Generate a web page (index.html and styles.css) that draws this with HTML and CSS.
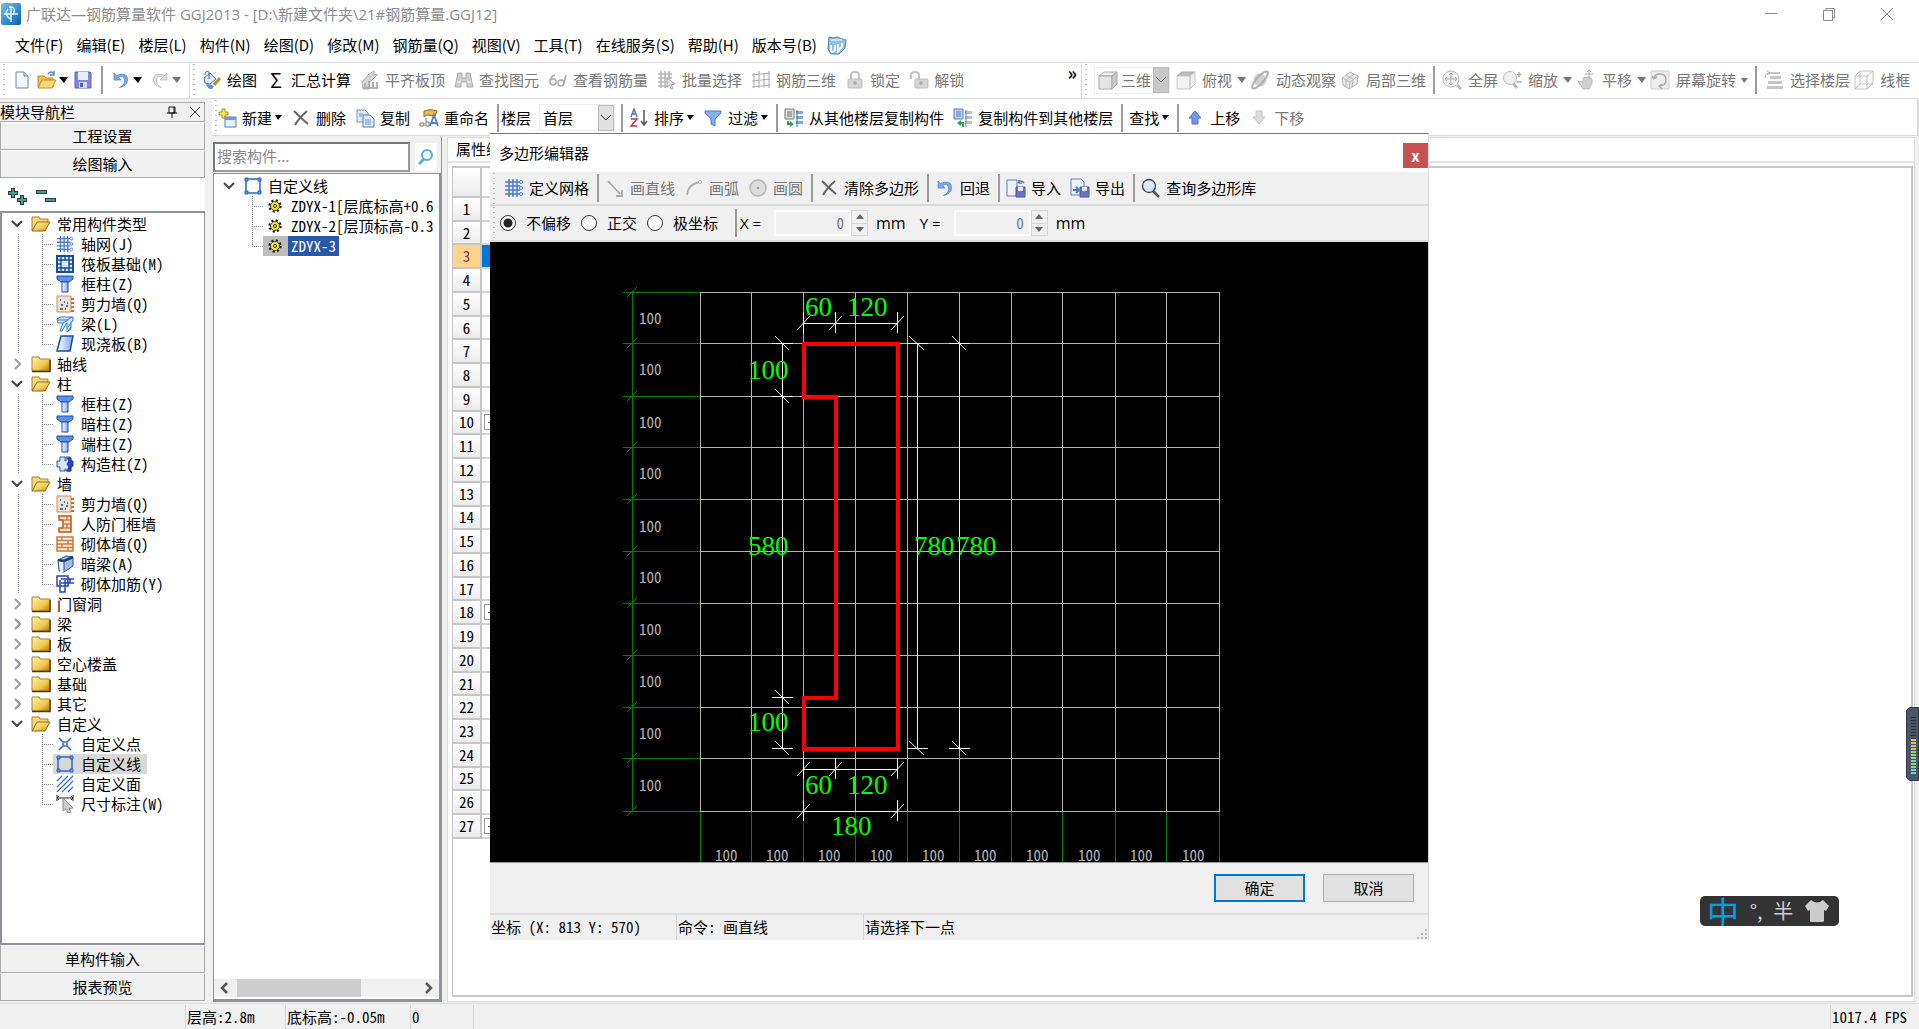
FILE: index.html
```html
<!DOCTYPE html>
<html lang="zh-CN">
<head>
<meta charset="utf-8">
<title>广联达—钢筋算量软件 GGJ2013</title>
<link rel="stylesheet" href="styles.css">
</head>
<body>
<svg class="defs" aria-hidden="true">
  <defs>
    <linearGradient id="gold" x1="0" y1="0" x2="1" y2="1"><stop offset="0" stop-color="#fff3b0"/><stop offset=".6" stop-color="#f2c84b"/><stop offset="1" stop-color="#b07a10"/></linearGradient>
    <linearGradient id="blue" x1="0" y1="0" x2="1" y2="0"><stop offset="0" stop-color="#fff"/><stop offset="1" stop-color="#7fa6f0"/></linearGradient>
    <linearGradient id="brand" x1="0" y1="0" x2="1" y2="1"><stop offset="0" stop-color="#6cc4f4"/><stop offset="1" stop-color="#0b5fb0"/></linearGradient>
  </defs>
  <symbol id="i-new" viewBox="0 0 20 20"><path d="M4 2h8l4 4v12H4z" fill="#f3f8fd" stroke="#6d87a8"/><path d="M12 2v4h4" fill="#cfe0f2" stroke="#6d87a8"/></symbol>
  <symbol id="i-open" viewBox="0 0 20 20"><path d="M1 6h6l2 2h7v9H1z" fill="#f0bf52" stroke="#c48a1c"/><path d="M1 18l4-8h14l-4 8z" fill="#fbd978" stroke="#c48a1c"/><path d="M11 4q3-4 6 0M17 1v4h-4" fill="none" stroke="#5d85b8" stroke-width="1.4"/></symbol>
  <symbol id="i-save" viewBox="0 0 20 20"><path d="M2 2h15l1 1v15H2z" fill="#8187d6" stroke="#5c62b0"/><path d="M5 2h10v8H5z" fill="#e8ebfa"/><path d="M6 12h8v6H6z" fill="#d3d6e8"/><path d="M7 13h3v4H7z" fill="#565ca8"/></symbol>
  <symbol id="i-undo" viewBox="0 0 20 20"><path d="M3 3v7h7L7.500 7.500q5-3 6 2t-5 8q9-2 8-9T5.500 5.500z" fill="#7aa6ec" stroke="#5b88d8" stroke-width=".8"/></symbol>
  <symbol id="i-redo" viewBox="0 0 20 20"><path d="M17 3v7h-7l2.500-2.500q-5-3-6 2t5 8q-9-2-8-9T14.500 5.500z" fill="#e0e0e0" stroke="#bbb" stroke-width=".8"/></symbol>
  <symbol id="i-paint" viewBox="0 0 20 20"><path d="M2 8l6-5 6 6-6 5-5-1z" fill="#dfe8f5" stroke="#4e6b98"/><path d="M7 9V2q-4-2-4 3" fill="none" stroke="#4e6b98"/><path d="M18 8l-6 7" stroke="#b8902c" stroke-width="3"/><path d="M4 14q5 0 8 2l-2 3q-4 1-6-5z" fill="#5b8fe0"/></symbol>
  <symbol id="i-flat" viewBox="0 0 20 20"><path d="M2 12l7-8 5-3v4l4-1-9 9v6H3z" fill="#d5d5d5" stroke="#b0b0b0"/><path d="M5 13v5M9 11v7M13 12v6M17 12v6M3 18h15" stroke="#b0b0b0" stroke-width="2"/></symbol>
  <symbol id="i-bino" viewBox="0 0 20 20"><path d="M4 3h4v5h4V3h4l3 14h-6v-5H7v5H1z" fill="#cfcfcf" stroke="#aaa"/><path d="M3 12h4M13 12h4" stroke="#fff"/></symbol>
  <symbol id="i-glass" viewBox="0 0 20 20"><g fill="none" stroke="#aaa" stroke-width="1.500"><circle cx="5" cy="12" r="3"/><circle cx="13" cy="13" r="3"/><path d="M2 11q1-5 5-6M16 13l2-8"/></g></symbol>
  <symbol id="i-batch" viewBox="0 0 20 20"><path d="M1 4h14M1 8h14M1 12h9M1 16h9M4 1v17M8 1v17M12 1v9" stroke="#b5b5b5" stroke-width="1.500"/><path d="M10 8l8 6-4 .5 2 4-2 .5-1.500-4-2.500 2z" fill="#e4e4e4" stroke="#aaa"/></symbol>
  <symbol id="i-mesh" viewBox="0 0 20 20"><path d="M3 3v15M8 1v17M13 3v15M18 1v17M1 5l18-2M1 11l18-2M1 17l18-2" stroke="#aaa" fill="none"/></symbol>
  <symbol id="i-lock" viewBox="0 0 20 20"><path d="M6 9V5q0-3 4-3t4 3v4" fill="none" stroke="#c2c2c2" stroke-width="2"/><rect x="3" y="9" width="14" height="9" rx="1" fill="#d4d4d4" stroke="#bbb"/><path d="M10 11v4M8 13h4" stroke="#999"/></symbol>
  <symbol id="i-unlock" viewBox="0 0 20 20"><path d="M2 9V5q0-3 4-3t4 3v4" fill="none" stroke="#c2c2c2" stroke-width="2"/><rect x="6" y="9" width="13" height="9" rx="1" fill="#d4d4d4" stroke="#bbb"/><path d="M12 11v4M10 13h4" stroke="#999"/></symbol>
  <symbol id="i-cube" viewBox="0 0 20 20"><path d="M1 6l5-4h13l-5 4z" fill="#eee" stroke="#aaa"/><path d="M1 6h13v13H1z" fill="#e4e4e4" stroke="#aaa"/><path d="M14 6l5-4v12l-5 5z" fill="#c8c8c8" stroke="#aaa"/></symbol>
  <symbol id="i-cubetop" viewBox="0 0 20 20"><path d="M1 6l5-4h13l-5 4z" fill="#bbb" stroke="#aaa"/><path d="M1 6h13v13H1zM14 6l5-4v12l-5 5z" fill="#f2f2f2" stroke="#c5c5c5"/></symbol>
  <symbol id="i-orbit" viewBox="0 0 20 20"><circle cx="10" cy="10" r="6.500" fill="#cfcfcf"/><ellipse cx="10" cy="10" rx="11" ry="3.500" transform="rotate(-48 10 10)" fill="none" stroke="#b0b0b0" stroke-width="2"/></symbol>
  <symbol id="i-part" viewBox="0 0 20 20"><path d="M2 8l8-6 8 4-1 8-8 5-6-4z" fill="#e8e8e8" stroke="#b8b8b8"/><path d="M2 8l8 4 8-6M10 12l-1 7M6 5l7 4-1 8M14 4l-8 6v7" fill="none" stroke="#b8b8b8"/></symbol>
  <symbol id="i-full" viewBox="0 0 20 20"><path d="M15 15l4 4" stroke="#bbb" stroke-width="3"/><circle cx="9" cy="9" r="8" fill="#f4f4f4" stroke="#bbb"/><path d="M9 3v12M3 9h12M7 5l2-2 2 2M7 13l2 2 2-2M5 7L3 9l2 2M13 7l2 2-2 2" fill="none" stroke="#aaa"/></symbol>
  <symbol id="i-zoom" viewBox="0 0 20 20"><path d="M11 13l4 5" stroke="#bbb" stroke-width="3"/><circle cx="8" cy="8" r="6.500" fill="#f0f0f0" stroke="#c0c0c0"/><path d="M17 2v5M14.500 4.500h5M14.500 12h5" stroke="#aaa" stroke-width="1.500"/></symbol>
  <symbol id="i-hand" viewBox="0 0 20 20"><path d="M2 11l5 1V8l6-1 3 2v4l-3 6H7z" fill="#d0d0d0" stroke="#bbb"/><path d="M13 0v9M9 4h8M11 2l2-2 2 2" stroke="#aaa" fill="none"/></symbol>
  <symbol id="i-rot" viewBox="0 0 20 20"><path d="M1 1h18v18H1z" fill="#eee" stroke="#ccc"/><path d="M4 9q0-5 6-5t6 6-7 6M4 9L2 6M4 9l3-2M9 16l3-2M9 16l3 3" fill="none" stroke="#aaa" stroke-width="1.500"/></symbol>
  <symbol id="i-floor" viewBox="0 0 20 20"><path d="M6 2h10v2H6zM6 6h11v3H6zM4 11h14v3H4zM3 16h16v3H3z" fill="#c5c5c5"/><path d="M1 8q0-5 5-5M3 1l3 2-3 2" fill="none" stroke="#aaa"/></symbol>
  <symbol id="i-wire" viewBox="0 0 20 20"><path d="M1 6h12v13H1zM1 6l5-5h13l-6 5M19 1v12l-6 6M6 1v13h13M6 14l-5 5" fill="none" stroke="#c0c0c0"/></symbol>
  <symbol id="i-create" viewBox="0 0 20 20"><path d="M5 1h3v3h3v3H8v3H5V7H2V4h3z" fill="#ffe257" stroke="#b8901c"/><rect x="8" y="9" width="11" height="10" fill="#e8f0fa" stroke="#5b7fc0"/><path d="M8 9h11v3H8z" fill="#6d98de"/></symbol>
  <symbol id="i-x" viewBox="0 0 20 20"><path d="M3 3q8 8 14 13M16 3Q8 10 4 17" fill="none" stroke="#666" stroke-width="2"/></symbol>
  <symbol id="i-copy" viewBox="0 0 20 20"><path d="M2 2h8l3 3v9H2z" fill="#dfeaf9" stroke="#6b90cc"/><path d="M8 7h7l4 4v8H8z" fill="#dfeaf9" stroke="#4f78bd"/><path d="M10 12h6M10 14h6M10 16h6M4 6h4M4 8h3" stroke="#6b90cc"/></symbol>
  <symbol id="i-rename" viewBox="0 0 20 20"><path d="M5 3q6-3 13 0l-2 5-8-1-3 2z" fill="#eeb94a" stroke="#8f6a22"/><path d="M11 18l4-11 4 11M12 15h6" stroke="#4b7fd6" stroke-width="1.800" fill="none"/><path d="M1 18v-3h4v3H1M7 10v8h3v-4H7" fill="none" stroke="#777"/></symbol>
  <symbol id="i-sort" viewBox="0 0 20 20"><path d="M2 9l3-8 3 8M3 6h4" fill="none" stroke="#4a78cc" stroke-width="1.500"/><path d="M2 11h6l-6 7h6" fill="none" stroke="#c03a3a" stroke-width="1.500"/><path d="M15 2v15M12 13l3 4 3-4" fill="none" stroke="#555" stroke-width="1.500"/></symbol>
  <symbol id="i-funnel" viewBox="0 0 20 20"><path d="M2 3h16v2l-6 6v7l-4-2v-5L2 5z" fill="#86aef2" stroke="#4a78cc"/></symbol>
  <symbol id="i-cfrom" viewBox="0 0 20 20"><path d="M1 1h9v10H1z" fill="#ddd" stroke="#777"/><path d="M3 4h5M3 6h5M3 8h5" stroke="#777"/><path d="M12 3h7v3h-7zM12 8h7v3h-7zM12 13h7v3h-7z" fill="#7ea7e6"/><path d="M3 13v4h3v2l4-3-4-3v2H5v-2z" fill="#2b9d4b"/><path d="M13 2v17" stroke="#3e66a8"/></symbol>
  <symbol id="i-cto" viewBox="0 0 20 20"><path d="M1 1h9v10H1z" fill="#bdd3f7" stroke="#5b7fc0"/><path d="M3 4h5M3 6h5M3 8h5" stroke="#5b7fc0"/><path d="M12 3h7v3h-7zM12 8h7v3h-7zM12 13h7v3h-7z" fill="#b5c0cc"/><path d="M13 2v17" stroke="#777"/><path d="M4 15l4-3v2h3v5H9v-3H8v2z" fill="#2b9d4b"/></symbol>
  <symbol id="i-up" viewBox="0 0 20 20"><path d="M10 3l6 7h-3v6H7v-6H4z" fill="#6d98ea" stroke="#4a70c4"/></symbol>
  <symbol id="i-down" viewBox="0 0 20 20"><path d="M10 16l6-7h-3V3H7v6H4z" fill="#ddd" stroke="#c6c6c6"/></symbol>
  <symbol id="i-grid" viewBox="0 0 20 20"><path d="M5 1v18M9 1v18M13 1v18M1 4h15M1 8h15M1 12h15M1 16h15" stroke="#4479da" stroke-width="1.500" fill="none"/><g fill="#fff" stroke="#4479da"><circle cx="17" cy="4" r="1.500"/><circle cx="17" cy="10" r="1.500"/><circle cx="17" cy="16" r="1.500"/></g></symbol>
  <symbol id="i-line" viewBox="0 0 20 20"><path d="M3 3l12 13M17 12v6h-6" fill="none" stroke="#aaa" stroke-width="1.800"/></symbol>
  <symbol id="i-arc" viewBox="0 0 20 20"><path d="M3 17Q4 6 16 4" fill="none" stroke="#b0b0b0" stroke-width="1.800"/><circle cx="16" cy="4" r="1.500" fill="#fff" stroke="#aaa"/></symbol>
  <symbol id="i-circle" viewBox="0 0 20 20"><circle cx="10" cy="10" r="8" fill="#dcdcdc" stroke="#b5b5b5" stroke-width="1.500"/><circle cx="10" cy="10" r="1.200" fill="#999"/></symbol>
  <symbol id="i-imp" viewBox="0 0 20 20"><path d="M1 2h10v16H1z" fill="#eef3fb" stroke="#5f80b5"/><path d="M10 9h9v10h-9z" fill="#6a70c4" stroke="#4b5098"/><path d="M12 9h5v4h-5z" fill="#e8ebfa"/><path d="M12 5q3-4 6 0M13 2v3h3" fill="none" stroke="#5f80b5" stroke-width="1.500"/></symbol>
  <symbol id="i-exp" viewBox="0 0 20 20"><path d="M1 1h10l3 3v13H1z" fill="#eef3fb" stroke="#5f80b5"/><path d="M10 9h9v10h-9z" fill="#6a70c4" stroke="#4b5098"/><path d="M12 9h5v4h-5z" fill="#e8ebfa"/><path d="M3 12h5M6 9l3 3-3 3" fill="none" stroke="#4a78cc" stroke-width="1.800"/></symbol>
  <symbol id="i-find" viewBox="0 0 20 20"><path d="M12 13l6 6" stroke="#555" stroke-width="2.500"/><circle cx="8" cy="8" r="6.500" fill="#d5eafa" stroke="#444" stroke-width="1.300"/></symbol>
  <symbol id="i-search" viewBox="0 0 20 20"><path d="M8 12l-5 5" stroke="#59aee6" stroke-width="3"/><circle cx="11" cy="8" r="5" fill="#eef8fe" stroke="#59aee6" stroke-width="2"/></symbol>
  <symbol id="i-dir" viewBox="0 0 20 18"><path d="M1 5V2h7l1 2h10v12H1z" fill="url(#gold)" stroke="#a5832c"/><path d="M1 16.500h18V5" fill="none" stroke="#4a3a12" stroke-width="1.500"/></symbol>
  <symbol id="i-diro" viewBox="0 0 20 18"><path d="M1 16V2h7l1 2h8v4" fill="#f8d77a" stroke="#a5832c"/><path d="M1 16L6 7h13l-5 9z" fill="url(#gold)" stroke="#8a681c"/></symbol>
  <symbol id="i-raft" viewBox="0 0 18 18"><path d="M1 1h16v16H1z" fill="#dbe8f8" stroke="#174f96" stroke-width="2"/><path d="M5 1v16M13 1v16M1 5h16M1 13h16M9 1v4M9 13v4M1 9h4M13 9h4" stroke="#174f96" stroke-width="1.500"/></symbol>
  <symbol id="i-col" viewBox="0 0 18 18"><path d="M1 1h16v3l-4 3H5L1 4z" fill="#5c8fe6" stroke="#1d4faa"/><path d="M6 7h6v10H6z" fill="url(#blue)" stroke="#1d4faa"/></symbol>
  <symbol id="i-shear" viewBox="0 0 18 18"><path d="M1 1h14v16H1z" fill="#e2e2e2" stroke="#dd8a4c"/><path d="M4 5h1M8 7h1M5 10h2M10 11h2M4 14h3M9 14h1M11 8h1" stroke="#444" stroke-width="1.500"/><path d="M15 4h3M15 8h3M15 12h3M15 16h3" stroke="#d06a1c" stroke-width="2"/></symbol>
  <symbol id="i-beam" viewBox="0 0 18 18"><path d="M1 4l3-2h13v4l-2 1v7l-4 3V8l-1 1-4 7H4l3-8H2z" fill="#cfe4fb" stroke="#2f7cc8"/><path d="M2 5h9l5-3M7 8l5-3M12 12l3-4M12 16l3-4" fill="none" stroke="#2f7cc8"/></symbol>
  <symbol id="i-slab" viewBox="0 0 18 18"><path d="M5 1h12l-3 15H1z" fill="url(#blue)" stroke="#174f96" stroke-width="1.500"/></symbol>
  <symbol id="i-gz" viewBox="0 0 18 18"><path d="M4 2h5v4h1V2h4v4h2v6h-2v4h-4v-2H9v2H4v-4H1V6h3z" fill="#d8e4f8" stroke="#2b5cb0"/><path d="M11 3h4v3h2v5h-2v5h-4l2-4-2-3 2-3z" fill="#2b4cc0" stroke="#1a2f9a"/></symbol>
  <symbol id="i-door" viewBox="0 0 18 18"><path d="M3 1h12v16H3v-4h4V5H3z" fill="#fbe0c8" stroke="#b8561c" stroke-width="1.500"/><path d="M8 5h7M8 9h7M8 13h7M11 1v4M11 9v4" stroke="#b8561c"/></symbol>
  <symbol id="i-brick" viewBox="0 0 18 18"><path d="M1 2h16v14H1z" fill="#fdf0e4" stroke="#d0743c" stroke-width="1.500"/><path d="M1 5.500h16M1 9h16M1 12.500h16M6 2v3M12 5v4M6 9v3M12 12v4" stroke="#d0743c" stroke-width="1.300"/></symbol>
  <symbol id="i-hbeam" viewBox="0 0 18 18"><path d="M2 5l8-4 7 1v9l-9 6-5-1z" fill="#9ebfe8" stroke="#2b5592"/><path d="M3 6h5v11H4z" fill="#e8f0fb"/><path d="M2 5l6 1 9-4" fill="none" stroke="#1f3f74" stroke-width="2.500"/><path d="M8 6v11" stroke="#2b5592"/></symbol>
  <symbol id="i-rein" viewBox="0 0 18 18"><path d="M1 1h11v10H1zM5 4h13M5 8h13M14 4v4M4 5v12h5V5" fill="none" stroke="#2447b8" stroke-width="1.500"/></symbol>
  <symbol id="i-pt" viewBox="0 0 18 18"><path d="M3 3l4.500 4.500M15 3l-4.500 4.500M3 15l4.500-4.500M15 15l-4.500-4.500M7 7h4v4H7z" fill="none" stroke="#3a6fc0" stroke-width="1.500"/></symbol>
  <symbol id="i-sq" viewBox="0 0 18 18"><path d="M2 2h14v14H2z" fill="none" stroke="#2b66c4" stroke-width="1.500"/><path d="M1 1h3v3H1zM14 1h3v3h-3zM1 14h3v3H1zM14 14h3v3h-3z" fill="#5d92e4" stroke="#2b66c4"/></symbol>
  <symbol id="i-face" viewBox="0 0 18 18"><path d="M1 6l5-5M1 12L12 1M1 17L17 1M6 17L17 6M12 17l5-5" stroke="#3a6fd0" stroke-width="1.300"/></symbol>
  <symbol id="i-dim" viewBox="0 0 18 18"><path d="M1 0v6M17 0v6M1 3h16M3 1L1 3l2 2M15 1l2 2-2 2" stroke="#222" fill="none"/><path d="M7 3l10 10-4 .5 2 4-3 .5-2-4-3 2z" fill="#ccc" stroke="#888"/></symbol>
  <symbol id="i-gear" viewBox="0 0 14 14"><circle cx="7" cy="7" r="5.200" fill="none" stroke="#222" stroke-width="3" stroke-dasharray="2 2.084"/><circle cx="7" cy="7" r="4.500" fill="#f4ea1c" stroke="#333" stroke-width=".8"/><circle cx="7" cy="7" r="1.500" fill="#fff" stroke="#222"/></symbol>
  <symbol id="i-chev" viewBox="0 0 14 14"><path d="M2 4l5 5 5-5" fill="none" stroke="#444" stroke-width="2"/></symbol>
  <symbol id="i-chevr" viewBox="0 0 14 14"><path d="M5 2l5 5-5 5" fill="none" stroke="#999" stroke-width="2"/></symbol>
</svg>

<header class="titlebar">
  <svg class="logo" viewBox="0 0 20 22"><rect width="20" height="22" rx="2" fill="url(#brand)"/><path d="M10 3v16M3 11h14M7 6q-5 6 4 11M8 4q8-1 4 8" fill="none" stroke="#e8f6ff" stroke-width="1.500"/></svg>
  <h1>广联达—钢筋算量软件 GGJ2013 - [D:\新建文件夹\21#钢筋算量.GGJ12]</h1>
  <div class="winbtns">
    <button aria-label="最小化"><svg viewBox="0 0 14 14"><path d="M1 6.500h12" stroke="#888"/></svg></button>
    <button aria-label="还原"><svg viewBox="0 0 14 14"><path d="M1.500 3.500h9v10h-9zM4 3V1.500h8.500V11H11" fill="none" stroke="#888"/></svg></button>
    <button aria-label="关闭"><svg viewBox="0 0 14 14"><path d="M1 1l12 12M13 1L1 13" stroke="#888"/></svg></button>
  </div>
</header>

<nav class="menubar">
  <button>文件(F)</button><button>编辑(E)</button><button>楼层(L)</button><button>构件(N)</button><button>绘图(D)</button><button>修改(M)</button><button>钢筋量(Q)</button><button>视图(V)</button><button>工具(T)</button><button>在线服务(S)</button><button>帮助(H)</button><button>版本号(B)</button>
  <svg class="ic bear" viewBox="0 0 20 20"><path d="M2 2l4 1 4-1 5 2 4 1-1 8-6 6H4l-3-5z" fill="#8fc2e4" stroke="#4b87b4"/><path d="M4 5h11" stroke="#c8e4f6" stroke-width="2"/><path d="M4 10v6q3 2 4-1v-5M11 9v7l4-4V8" fill="none" stroke="#fff" stroke-width="1.800"/></svg>
</nav>

<div class="toolrow">
  <div class="bar files">
    <div class="group">
      <button aria-label="新建"><svg class="ic"><use href="#i-new"/></svg></button>
      <button class="drop" aria-label="打开"><svg class="ic"><use href="#i-open"/></svg><i class="caret big"></i></button>
      <button aria-label="保存"><svg class="ic"><use href="#i-save"/></svg></button>
    </div>
    <div class="group">
      <button class="drop" aria-label="撤销"><svg class="ic"><use href="#i-undo"/></svg><i class="caret big"></i></button>
      <button class="drop off" aria-label="恢复"><svg class="ic"><use href="#i-redo"/></svg><i class="caret big"></i></button>
    </div>
  </div>
  <div class="bar">
    <div class="group">
      <button><svg class="ic"><use href="#i-paint"/></svg>绘图</button>
      <button><span class="ic sigma">Σ</span>汇总计算</button>
      <button class="off"><svg class="ic"><use href="#i-flat"/></svg>平齐板顶</button>
      <button class="off"><svg class="ic"><use href="#i-bino"/></svg>查找图元</button>
      <button class="off"><svg class="ic"><use href="#i-glass"/></svg>查看钢筋量</button>
      <button class="off"><svg class="ic"><use href="#i-batch"/></svg>批量选择</button>
      <button class="off"><svg class="ic"><use href="#i-mesh"/></svg>钢筋三维</button>
      <button class="off"><svg class="ic"><use href="#i-lock"/></svg>锁定</button>
      <button class="off"><svg class="ic"><use href="#i-unlock"/></svg>解锁</button>
    </div>
    <button class="more" aria-label="更多">»</button>
  </div>
  <div class="bar view">
    <div class="combo wide"><svg class="ic"><use href="#i-cube"/></svg><select aria-label="视图模式" disabled><option>三维</option></select><i class="arrow"><svg viewBox="0 0 14 14"><path d="M2 4l5 5 5-5" fill="none" stroke="#777"/></svg></i></div>
    <div class="group">
      <button class="drop off"><svg class="ic"><use href="#i-cubetop"/></svg>俯视<i class="caret big"></i></button>
      <button class="off"><svg class="ic"><use href="#i-orbit"/></svg>动态观察</button>
      <button class="off"><svg class="ic"><use href="#i-part"/></svg>局部三维</button>
    </div>
    <div class="group">
      <button class="off"><svg class="ic"><use href="#i-full"/></svg>全屏</button>
      <button class="drop off"><svg class="ic"><use href="#i-zoom"/></svg>缩放<i class="caret big"></i></button>
      <button class="drop off"><svg class="ic"><use href="#i-hand"/></svg>平移<i class="caret big"></i></button>
      <button class="drop off"><svg class="ic"><use href="#i-rot"/></svg>屏幕旋转<i class="caret"></i></button>
    </div>
    <div class="group">
      <button class="off"><svg class="ic"><use href="#i-floor"/></svg>选择楼层</button>
      <button class="off"><svg class="ic"><use href="#i-wire"/></svg>线框</button>
    </div>
  </div>
</div>

<main class="work">
  <aside class="side">
    <div class="sidehead"><h2>模块导航栏</h2>
      <button aria-label="固定"><svg viewBox="0 0 12 12"><path d="M3 1h6v6H3zM1 7h10M6 7v5M8 1v6" fill="none" stroke="#111"/></svg></button>
      <button aria-label="关闭"><svg viewBox="0 0 12 12"><path d="M1 1l10 10M11 1L1 11" stroke="#333"/></svg></button>
    </div>
    <button class="tab">工程设置</button>
    <button class="tab">绘图输入</button>
    <div class="expand">
      <button aria-label="全部展开"><svg viewBox="0 0 20 18"><path d="M5 1v10M0 6h10M14 8v10M9 13h10" stroke="#2c3c3a" stroke-width="4"/><path d="M5 2v8M1 6h8M14 9v8M10 13h8" stroke="#4f9a90" stroke-width="2"/></svg></button>
      <button aria-label="全部折叠"><svg viewBox="0 0 20 18"><path d="M0 5h11M9 13h11" stroke="#2c3c3a" stroke-width="4"/><path d="M1 5h9M10 13h9" stroke="#4f9a90" stroke-width="2"/></svg></button>
    </div>
    <ul class="tree nav">
      <li><div class="row"><svg class="tw"><use href="#i-chev"/></svg><svg class="dir"><use href="#i-diro"/></svg>常用构件类型</div>
        <ul>
          <li><a href="#"><svg><use href="#i-grid"/></svg>轴网(J)</a></li>
          <li><a href="#"><svg><use href="#i-raft"/></svg>筏板基础(M)</a></li>
          <li><a href="#"><svg><use href="#i-col"/></svg>框柱(Z)</a></li>
          <li><a href="#"><svg><use href="#i-shear"/></svg>剪力墙(Q)</a></li>
          <li><a href="#"><svg><use href="#i-beam"/></svg>梁(L)</a></li>
          <li><a href="#"><svg><use href="#i-slab"/></svg>现浇板(B)</a></li>
        </ul></li>
      <li><div class="row"><svg class="tw"><use href="#i-chevr"/></svg><svg class="dir"><use href="#i-dir"/></svg>轴线</div></li>
      <li><div class="row"><svg class="tw"><use href="#i-chev"/></svg><svg class="dir"><use href="#i-diro"/></svg>柱</div>
        <ul>
          <li><a href="#"><svg><use href="#i-col"/></svg>框柱(Z)</a></li>
          <li><a href="#"><svg><use href="#i-col"/></svg>暗柱(Z)</a></li>
          <li><a href="#"><svg><use href="#i-col"/></svg>端柱(Z)</a></li>
          <li><a href="#"><svg><use href="#i-gz"/></svg>构造柱(Z)</a></li>
        </ul></li>
      <li><div class="row"><svg class="tw"><use href="#i-chev"/></svg><svg class="dir"><use href="#i-diro"/></svg>墙</div>
        <ul>
          <li><a href="#"><svg><use href="#i-shear"/></svg>剪力墙(Q)</a></li>
          <li><a href="#"><svg><use href="#i-door"/></svg>人防门框墙</a></li>
          <li><a href="#"><svg><use href="#i-brick"/></svg>砌体墙(Q)</a></li>
          <li><a href="#"><svg><use href="#i-hbeam"/></svg>暗梁(A)</a></li>
          <li><a href="#"><svg><use href="#i-rein"/></svg>砌体加筋(Y)</a></li>
        </ul></li>
      <li><div class="row"><svg class="tw"><use href="#i-chevr"/></svg><svg class="dir"><use href="#i-dir"/></svg>门窗洞</div></li>
      <li><div class="row"><svg class="tw"><use href="#i-chevr"/></svg><svg class="dir"><use href="#i-dir"/></svg>梁</div></li>
      <li><div class="row"><svg class="tw"><use href="#i-chevr"/></svg><svg class="dir"><use href="#i-dir"/></svg>板</div></li>
      <li><div class="row"><svg class="tw"><use href="#i-chevr"/></svg><svg class="dir"><use href="#i-dir"/></svg>空心楼盖</div></li>
      <li><div class="row"><svg class="tw"><use href="#i-chevr"/></svg><svg class="dir"><use href="#i-dir"/></svg>基础</div></li>
      <li><div class="row"><svg class="tw"><use href="#i-chevr"/></svg><svg class="dir"><use href="#i-dir"/></svg>其它</div></li>
      <li><div class="row"><svg class="tw"><use href="#i-chev"/></svg><svg class="dir"><use href="#i-diro"/></svg>自定义</div>
        <ul>
          <li><a href="#"><svg><use href="#i-pt"/></svg>自定义点</a></li>
          <li><a href="#" class="current"><svg><use href="#i-sq"/></svg>自定义线</a></li>
          <li><a href="#"><svg><use href="#i-face"/></svg>自定义面</a></li>
          <li><a href="#"><svg><use href="#i-dim"/></svg>尺寸标注(W)</a></li>
        </ul></li>
    </ul>
    <button class="tab">单构件输入</button>
    <button class="tab">报表预览</button>
  </aside>

  <div class="content">
    <div class="bar parts">
      <div class="group">
        <button class="drop"><svg class="ic"><use href="#i-create"/></svg>新建<i class="caret"></i></button>
        <button><svg class="ic"><use href="#i-x"/></svg>删除</button>
        <button><svg class="ic"><use href="#i-copy"/></svg>复制</button>
        <button><svg class="ic"><use href="#i-rename"/></svg>重命名</button>
      </div>
      <div class="group field">
        <label for="floor">楼层</label>
        <div class="combo"><select id="floor"><option>首层</option></select><i class="arrow"><svg viewBox="0 0 14 14"><path d="M2 4l5 5 5-5" fill="none" stroke="#333"/></svg></i></div>
      </div>
      <div class="group">
        <button class="drop"><svg class="ic"><use href="#i-sort"/></svg>排序<i class="caret"></i></button>
        <button class="drop"><svg class="ic"><use href="#i-funnel"/></svg>过滤<i class="caret"></i></button>
      </div>
      <div class="group">
        <button><svg class="ic"><use href="#i-cfrom"/></svg>从其他楼层复制构件</button>
        <button><svg class="ic"><use href="#i-cto"/></svg>复制构件到其他楼层</button>
      </div>
      <div class="group">
        <button class="drop plain">查找<i class="caret"></i></button>
      </div>
      <div class="group">
        <button><svg class="ic"><use href="#i-up"/></svg>上移</button>
        <button class="off"><svg class="ic"><use href="#i-down"/></svg>下移</button>
      </div>
    </div>
    <div class="panes">
      <section class="list">
        <div class="search"><input type="text" placeholder="搜索构件..." aria-label="搜索构件"><button aria-label="搜索"><svg class="ic"><use href="#i-search"/></svg></button></div>
        <div class="listbox">
          <ul class="tree comps">
            <li><div class="row"><svg class="tw"><use href="#i-chev"/></svg><svg><use href="#i-sq"/></svg>自定义线</div>
              <ul>
                <li><a href="#"><svg><use href="#i-gear"/></svg><span>ZDYX-1[层底标高+0.6</span></a></li>
                <li><a href="#"><svg><use href="#i-gear"/></svg><span>ZDYX-2[层顶标高-0.3</span></a></li>
                <li><a href="#" class="picked"><svg><use href="#i-gear"/></svg><span>ZDYX-3</span></a></li>
              </ul></li>
          </ul>
          <div class="scroll"><svg viewBox="0 0 14 14"><path d="M9 2L4 7l5 5" fill="none" stroke="#555" stroke-width="2.500"/></svg><div class="track"><div class="thumb"></div></div><svg viewBox="0 0 14 14"><path d="M5 2l5 5-5 5" fill="none" stroke="#555" stroke-width="2.500"/></svg></div>
        </div>
      </section>
      <section class="props">
        <h2>属性编辑</h2>
        <div class="sheet">
          <table>
            <thead><tr><th></th><td></td></tr></thead>
            <tbody>
              <tr><th>1</th><td></td></tr><tr><th>2</th><td></td></tr><tr class="active"><th>3</th><td></td></tr>
              <tr><th>4</th><td></td></tr><tr><th>5</th><td></td></tr><tr><th>6</th><td></td></tr>
              <tr><th>7</th><td></td></tr><tr><th>8</th><td></td></tr><tr><th>9</th><td></td></tr>
              <tr><th>10</th><td><i class="fold"></i></td></tr><tr><th>11</th><td></td></tr><tr><th>12</th><td></td></tr>
              <tr><th>13</th><td></td></tr><tr><th>14</th><td></td></tr><tr><th>15</th><td></td></tr>
              <tr><th>16</th><td></td></tr><tr><th>17</th><td></td></tr><tr><th>18</th><td><i class="fold"></i></td></tr>
              <tr><th>19</th><td></td></tr><tr><th>20</th><td></td></tr><tr><th>21</th><td></td></tr>
              <tr><th>22</th><td></td></tr><tr><th>23</th><td></td></tr><tr><th>24</th><td></td></tr>
              <tr><th>25</th><td></td></tr><tr><th>26</th><td></td></tr><tr><th>27</th><td><i class="fold"></i></td></tr>
            </tbody>
          </table>
        </div>
      </section>
    </div>
  </div>
</main>

<footer class="status"><span class="s-blank"></span><span class="s-h">层高:2.8m</span><span class="s-b">底标高:-0.05m</span><span class="s-n">0</span><span class="s-rest"></span><span class="s-fps">1017.4 FPS</span></footer>

<div class="dialog" role="dialog" aria-labelledby="dlg-title">
  <div class="dlg-head"><h2 id="dlg-title">多边形编辑器</h2><button aria-label="关闭">x</button></div>
  <div class="bar">
    <div class="group"><button><svg class="ic"><use href="#i-grid"/></svg>定义网格</button></div>
    <div class="group">
      <button class="off"><svg class="ic"><use href="#i-line"/></svg>画直线</button>
      <button class="off"><svg class="ic"><use href="#i-arc"/></svg>画弧</button>
      <button class="off"><svg class="ic"><use href="#i-circle"/></svg>画圆</button>
    </div>
    <div class="group"><button><svg class="ic"><use href="#i-x"/></svg>清除多边形</button></div>
    <div class="group"><button><svg class="ic"><use href="#i-undo"/></svg>回退</button></div>
    <div class="group">
      <button><svg class="ic"><use href="#i-imp"/></svg>导入</button>
      <button><svg class="ic"><use href="#i-exp"/></svg>导出</button>
    </div>
    <div class="group"><button><svg class="ic"><use href="#i-find"/></svg>查询多边形库</button></div>
  </div>
  <div class="bar offset">
    <label><input type="radio" name="mode" checked>不偏移</label>
    <label><input type="radio" name="mode">正交</label>
    <label><input type="radio" name="mode">极坐标</label>
    <div class="group coord">
      <label for="cx">X =</label><div class="num"><input id="cx" type="text" value="0" disabled><span class="spin"><button aria-label="增加"></button><button aria-label="减少" class="dn"></button></span></div><span>mm</span>
      <label for="cy" class="second">Y =</label><div class="num"><input id="cy" type="text" value="0" disabled><span class="spin"><button aria-label="增加"></button><button aria-label="减少" class="dn"></button></span></div><span>mm</span>
    </div>
  </div>
  <svg class="canvas" viewBox="0 0 938 620" preserveAspectRatio="xMinYMin slice">
    <g class="g-axis" transform="translate(-1 -1)">
      <path d="M143.500 51V570M134 51.500h77M134 102.500h77M134 155.500h77M134 206.500h77M134 258.500h77M134 310.500h77M134 362.500h77M134 414.500h77M134 466.500h77M134 517.500h77M134 570.500h77"/>
      <path d="M211.500 570v52M262.500 570v52M314.500 570v52M366.500 570v52M418.500 570v52M470.500 570v52M522.500 570v52M573.500 570v52M626.500 570v52M677.500 570v52M730.500 570v52"/>
      <path d="M138 56l10-10M138 107l10-10M138 160l10-10M138 211l10-10M138 263l10-10M138 315l10-10M138 367l10-10M138 419l10-10M138 471l10-10M138 522l10-10M138 575l10-10"/>
    </g>
    <g class="g-grid" transform="translate(-1 -1)">
      <path d="M211 51.500h519M211 102.500h519M211 155.500h519M211 206.500h519M211 258.500h519M211 310.500h519M211 362.500h519M211 414.500h519M211 466.500h519M211 517.500h519M211 570.500h519"/>
      <path d="M211.500 51v520M262.500 51v520M314.500 51v520M366.500 51v520M418.500 51v520M470.500 51v520M522.500 51v520M573.500 51v520M626.500 51v520M677.500 51v520M730.500 51v520"/>
    </g>
    <g class="g-dim" transform="translate(-1 -1)">
      <path d="M314 82.500h94M314.500 71v21M346.500 71v21M408.500 71v21M308 89l13-14M340 89l13-14M402 89l13-14"/>
      <path d="M293.500 102v405M283 102.500h21M283 155.500h21M283 456.500h21M283 507.500h21M286 95l14 14M286 148l14 14M286 449l14 14M286 500l14 14"/>
      <path d="M428.500 102v405M470.500 102v405M418 102.500h21M460 102.500h21M418 507.500h21M460 507.500h21M420 95l15 14M463 95l14 14M420 500l15 14M463 500l14 14"/>
      <path d="M314 528.500h94M314.500 517v21M346.500 517v21M408.500 517v21M308 535l13-14M340 535l13-14M402 535l13-14M314 570.500h94M314.500 559v21M408.500 559v21M308 577l13-14M402 577l13-14"/>
    </g>
    <path class="g-shape" d="M314 102H408V507H314V456H346V155H314Z"/>
    <g class="g-num">
      <text x="315" y="74">60</text><text x="357" y="74">120</text><text x="258" y="137">100</text><text x="258" y="313">580</text><text x="424" y="313">780</text><text x="466" y="313">780</text><text x="258" y="489">100</text><text x="315" y="552">60</text><text x="357" y="552">120</text><text x="341" y="593">180</text>
    </g>
    <g class="g-lab">
      <text x="149" y="82">100</text><text x="149" y="133">100</text><text x="149" y="186">100</text><text x="149" y="237">100</text><text x="149" y="290">100</text><text x="149" y="341">100</text><text x="149" y="393">100</text><text x="149" y="445">100</text><text x="149" y="497">100</text><text x="149" y="549">100</text>
      <text x="225" y="619">100</text><text x="276" y="619">100</text><text x="328" y="619">100</text><text x="380" y="619">100</text><text x="432" y="619">100</text><text x="484" y="619">100</text><text x="536" y="619">100</text><text x="588" y="619">100</text><text x="640" y="619">100</text><text x="692" y="619">100</text>
    </g>
  </svg>
  <div class="dlg-actions"><button class="primary">确定</button><button>取消</button></div>
  <div class="dlg-status"><span class="d-xy">坐标 (X: 813 Y: 570)</span><span class="d-cmd">命令: 画直线</span><span class="d-tip">请选择下一点</span>
    <svg class="size" viewBox="0 0 12 12"><path d="M9 1h2v2H9zM9 5h2v2H9zM9 9h2v2H9zM5 5h2v2H5zM5 9h2v2H5zM1 9h2v2H1z" fill="#bbb"/></svg></div>
</div>

<div class="ime"><b>中</b><span>°,</span><span>半</span><svg viewBox="0 0 26 24"><path d="M7 1q6 5 12 0l6 6-3 5-2-1v11q0 1-2 1H8q-2 0-2-1V11l-2 1-3-5z" fill="#ccc"/></svg></div>
<div class="meter"><i class="idle"></i><i class="load"></i></div>
</body>
</html>
```
FILE: styles.css
```css
* { box-sizing: border-box; }
:root {
  --ui: "Noto Sans CJK SC", sans-serif;
  --mono: "Noto Sans Mono CJK SC", "Noto Sans CJK SC", monospace;
  --face: #f0f0f0;
  --line: #dadada;
}
body {
  margin: 0;
  min-height: 100vh;
  display: flex;
  flex-direction: column;
  position: relative;
  overflow: hidden;
  background: var(--face);
  color: #000;
  font: 15px/20px var(--ui);
}
button, input, select { font: inherit; color: inherit; padding: 0; border: 0; background: none; }
button { white-space: nowrap; }
h1, h2 { margin: 0; font-size: 15px; font-weight: 400; }
ul { list-style: none; margin: 0; padding: 0; }
a { color: inherit; text-decoration: none; }
svg { display: block; flex: none; }
.defs { position: absolute; width: 0; height: 0; }
.ic { width: 20px; height: 20px; flex: none; }

/* title bar and menu */
.titlebar { display: flex; align-items: center; height: 28px; padding-left: 1px; background: #fff; color: #8c8c8c; }
.logo { width: 20px; height: 22px; margin-right: 5px; }
.titlebar h1 { flex: 1; font-family: "Open Sans", var(--ui); }
.winbtns { display: flex; gap: 44px; padding-right: 25px; }
.winbtns svg { width: 14px; height: 14px; }
.menubar { display: flex; align-items: center; gap: 13px; height: 35px; padding-left: 15px; background: #fff; border-bottom: 1px solid var(--line); }
.bear { margin-left: -3px; }

/* toolbars */
.toolrow { display: grid; grid-template-columns: 189px 892px 1fr; height: 36px; background: #fff; border-bottom: 1px solid var(--line); }
.bar { display: flex; align-items: center; min-width: 0; padding-left: 12px; background: radial-gradient(circle, #bbb 1px, transparent 1px) 2px 4px / 4px 5px repeat-y; }
.bar button { display: flex; align-items: center; gap: 5px; }
.toolrow .bar { padding-bottom: 1px; }
.toolrow .bar + .bar { border-left: 1px solid var(--line); }
.group { display: flex; align-items: center; gap: 9px; height: 28px; padding-right: 8px; }
.group + .group { border-left: 2px solid #9c9c9c; padding-left: 6px; }
.off { color: #777; }
.caret { border: 4px solid transparent; border-top: 5px solid currentColor; border-bottom: 0; border-left-width: 3px; margin-left: -1px; }
.caret.big { border-left-width: 5px; border-top-width: 6px; }
.sigma { text-align: center; font-size: 20px; }
.files .group { gap: 5px; }
.files .group + .group { padding-left: 8px; gap: 8px; }
.files .drop { gap: 3px; }
.more { margin-left: auto; padding-right: 4px; font-size: 18px; font-weight: 700; line-height: 12px; align-self: flex-start; }
.bar .more { margin-top: 3px; }
.view .group { gap: 4px; padding-right: 7px; }
.view .group + .group { padding-left: 7px; }
.view .group button { gap: 6px; }
.combo { display: flex; align-items: center; width: 76px; height: 27px; border: 1px solid #eee; }
.combo select { flex: 1; min-width: 0; appearance: none; padding-left: 3px; color: inherit; opacity: 1; }
.combo .arrow { width: 16px; height: 26px; display: flex; align-items: center; background: #e0e0e0; border: 1px solid #bbb; }
.wide { color: #777; margin-right: 6px; padding-left: 3px; }
.wide .arrow { background: #c8c8c8; }

/* main area */
.work { flex: 1; display: grid; grid-template-columns: 205px 1fr; column-gap: 7px; min-height: 0; }
.side { display: flex; flex-direction: column; padding: 3px 0 2px; }
.sidehead { display: flex; align-items: center; height: 20px; border: 1px solid #aaa; border-left: 0; padding-right: 3px; gap: 11px; }
.sidehead h2 { flex: 1; line-height: 18px; }
.sidehead svg { width: 12px; height: 12px; }
.tab { height: 28px; line-height: 20px; flex: none; border: 1px solid #aaa; border-width: 0 1px 1px; border-top: 1px solid #fff; background: var(--face); }
.expand { height: 33px; flex: none; display: flex; align-items: center; gap: 8px; padding: 2px 0 0 8px; background: #fff; }
.expand svg { width: 20px; height: 18px; }
.tree { font-family: var(--mono); background: #fff; }
.nav { flex: 1; border: 2px solid #8e9298; border-width: 2px 1px 2px 2px; padding-top: 1px; }
.row, .tree a { display: flex; align-items: center; height: 20px; white-space: nowrap; }
.tree .row { padding-left: 8px; }
.tw { width: 14px; height: 14px; }
.tw + svg { margin: 0 6px 0 7px; }
.dir { width: 20px; height: 18px; }
.tree li li { display: flex; align-items: center; height: 20px; padding-left: 40px; --dots: repeating-linear-gradient(#888 0 1px, transparent 1px 2px);
  background: var(--dots) 40px 0 / 1px 100% no-repeat, var(--dots) 16px 0 / 1px 100% no-repeat; }
.tree li li:last-child { background-size: 1px 10px, 1px 100%; }
.tree > li:last-child li { background-image: var(--dots), none; }
.tree li li::before { content: ""; width: 11px; border-top: 1px dotted #888; }
.nav a { padding: 0 6px 0 3px; gap: 7px; }
.nav a svg { width: 18px; height: 18px; }
.nav .current { background: #d9d9d9; }

.content { display: flex; flex-direction: column; min-width: 0; }
.parts { height: 37px; padding: 1px 0 0 5px; background-color: #fff; border: 1px solid var(--line); border-width: 0 2px 1px 0; }
.parts .caret { margin-left: -2px; }
.parts .field { gap: 8px; padding: 0 6px 0 2px; }
.panes { flex: 1; display: grid; grid-template-columns: 230px 1fr; column-gap: 5px; padding: 1px 4px 1px 0; min-height: 0; }
.list { display: flex; flex-direction: column; padding: 5px 0 0 1px; border-right: 1px solid #999; }
.search { display: flex; align-items: center; gap: 5px; height: 30px; }
.search input { width: 197px; height: 30px; border: 2px solid #888; border-color: #777 #999 #999 #777; background: #fff; padding: 0 0 4px 2px; }
.search input::placeholder { color: #888; opacity: 1; }
.search button { background: #fff; padding: 4px 1px; }
.listbox { flex: 1; display: flex; flex-direction: column; background: #fff; border: 2px solid #8e9298; border-width: 1px 2px 3px 1px; margin-top: 1px; }
.comps { flex: 1; padding-top: 2px; }
.comps svg { width: 18px; height: 18px; }
.comps .tw { width: 14px; height: 14px; }
.comps .tw + svg { margin: 0 6px 0 8px; }
.comps li li { padding-left: 38px; background-position: 38px 0, 0 0; }
.comps a svg { width: 14px; height: 14px; margin: 0 6px 0 5px; }
.comps a span { padding: 0 3px; height: 20px; }
.comps .picked { background: #bdbdbd; }
.comps .picked span { background: #2a57a8; color: #fff; }
.scroll { display: flex; align-items: center; gap: 5px; height: 18px; padding: 0 4px; background: var(--face); margin-bottom: 2px; }
.scroll svg { width: 14px; height: 14px; }
.track { flex: 1; height: 18px; }
.thumb { width: 69%; height: 18px; background: #cdcdcd; }
.props { display: flex; flex-direction: column; background: #fff; border: 1px solid var(--line); padding: 0 1px 4px 4px; min-width: 0; }
.props h2 { height: 25px; line-height: 22px; margin: 0 -1px 3px -4px; padding-left: 8px; border-bottom: 2px solid #e3e3e3; }
.sheet { flex: 1; border: 2px solid #c4c5cb; border-width: 2px 2px 2px 1px; }
.sheet table { border-collapse: collapse; height: 671px; }
.sheet th { width: 28px; padding: 0; font: 15px/18px var(--mono); background: linear-gradient(#fff, #ececec); border: solid #c6c6c6; border-width: 0 2px 2px 0; }
.sheet td { width: 400px; padding: 0 0 0 2px; border-bottom: 2px solid #d4d4d4; }
.sheet thead th { height: 29px; }
.active th { background: #ffd58e; color: #7a2b5e; }
.active td { background: #0078d7; }
.fold { display: block; width: 16px; height: 16px; border: 1px solid #999; background: linear-gradient(#444, #444) center / 8px 1px no-repeat #fff; }

.status { display: flex; align-items: center; height: 26px; border-top: 1px solid #ddd; font-family: var(--mono); }
.status span { height: 24px; line-height: 23px; white-space: nowrap; border-left: 1px solid #d4d4d4; padding-left: 1px; }
.status .s-blank { width: 185px; border: 0; }
.s-h { width: 100px; }
.s-b { width: 125px; }
.s-n { width: 63px; }
.s-rest { flex: 1; }
.s-fps { width: 89px; }

/* polygon editor window */
.dialog { position: absolute; left: 490px; top: 133px; width: 939px; background: var(--face); border-top: 1px solid #777; border-right: 1px solid #ddd; }
.dlg-head { display: flex; justify-content: space-between; align-items: flex-start; height: 38px; padding: 9px 0 0 9px; background: #fff; }
.dlg-head button { width: 25px; height: 25px; background: #c75050; color: #fff; font-weight: 700; line-height: 20px; }
.dialog .bar { height: 34px; padding-left: 14px; border-bottom: 2px solid #dcdcdc; }
.dialog .offset { height: 36px; padding-left: 10px; }
.offset > label { display: flex; align-items: center; gap: 10px; margin-right: 10px; }
.offset input[type="radio"] { appearance: none; width: 16px; height: 16px; margin: 0; border: 1px solid #333; border-radius: 50%; background: #fff; }
.offset input[type="radio"]:checked { background: radial-gradient(circle, #222 0 4px, #fff 5px); }
.coord { margin-left: 7px; padding-left: 3px; border-left: 2px solid #999; gap: 8px; font-family: "Open Sans", var(--ui); }
.coord label { width: 26px; white-space: nowrap; }
.coord .second { margin-left: 6px; }
.coord span { font-size: 16px; }
.num { display: flex; width: 94px; height: 26px; }
.num input { width: 77px; border: 2px solid #fbfbfb; text-align: right; padding-right: 5px; color: #777; font-family: var(--mono); }
.num .spin { width: 17px; display: flex; flex-direction: column; border: 1px solid #d6d6d6; }
.spin button { flex: 1; justify-content: center; }
.spin button::before { content: ""; border: 4px solid transparent; border-top: 0; border-bottom: 5px solid #666; }
.spin button.dn { border-top: 1px solid #d6d6d6; }
.spin button.dn::before { border-bottom: 0; border-top: 5px solid #666; }
.canvas { width: 100%; height: 620px; background: #000; }
.g-axis { stroke: #008000; fill: none; }
.g-grid { stroke: #b4b4b4; fill: none; }
.g-dim { stroke: #f4f4f4; fill: none; }
.g-shape { stroke: #f00; stroke-width: 4; fill: none; }
.g-num { fill: #0f0; font: 27px "Liberation Serif", serif; }
.g-lab { fill: #b4b4b4; font: 15px var(--mono); }
.dlg-actions { display: flex; justify-content: flex-end; gap: 18px; padding: 11px 14px; border-top: 1px solid #999; border-bottom: 2px solid #dedede; }
.dlg-actions button { width: 91px; height: 28px; background: #e1e1e1; border: 1px solid #adadad; line-height: 20px; }
.dlg-actions .primary { border: 2px solid #0078d7; }
.dlg-status { display: flex; height: 25px; line-height: 23px; font-family: var(--mono); }
.dlg-status span { border-left: 1px solid #d4d4d4; padding-left: 1px; white-space: nowrap; }
.dlg-status .d-xy { width: 186px; border: 0; }
.d-cmd { width: 187px; }
.d-tip { flex: 1; }
.size { width: 12px; height: 12px; align-self: flex-end; }

/* floating desktop widgets */
.ime { position: absolute; right: 80px; bottom: 103px; display: flex; align-items: center; justify-content: space-between; width: 139px; height: 30px; padding: 0 9px 0 7px; border-radius: 5px; background: #333; color: #ccc; font-size: 20px; overflow: hidden; }
.ime b { color: #00a0e9; font-size: 32px; font-weight: 400; line-height: 30px; }
.ime svg { width: 26px; height: 24px; }
.meter { position: absolute; right: 0; bottom: 248px; width: 13px; height: 74px; padding: 9px 2px 0 4px; border-radius: 5px 0 0 5px; background: #4d5468; border: 1px solid #333a48; }
.meter i { display: block; }
.idle { height: 22px; background: repeating-linear-gradient(#2c303c 0 1px, #4d5468 1px 3px); }
.load { height: 36px; background: repeating-linear-gradient(transparent 0 2px, #4d5468 2px 3px), linear-gradient(#e0c83c, #8fd86a 50%, #4de0c8); }
```
